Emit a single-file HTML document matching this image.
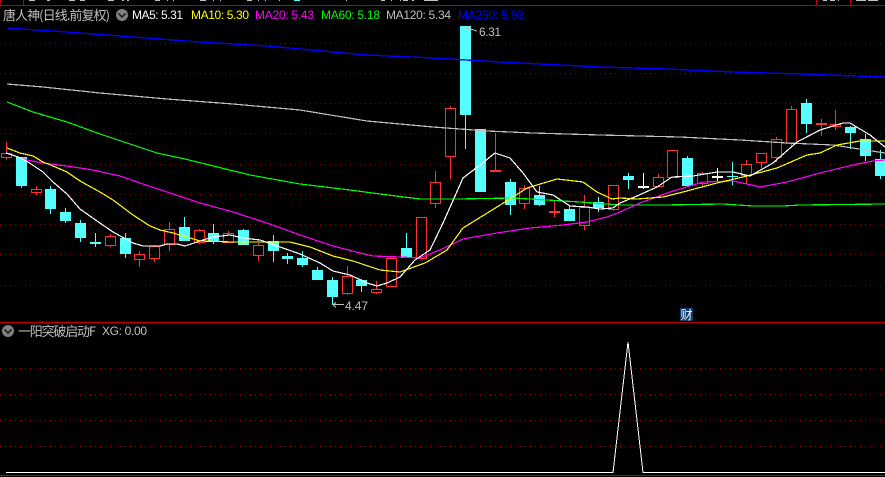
<!DOCTYPE html>
<html><head><meta charset="utf-8"><style>
html,body{margin:0;padding:0;background:#000;width:885px;height:477px;overflow:hidden}
svg{display:block}
text{font-family:"Liberation Sans","WenQuanYi Zen Hei","Noto Sans CJK SC",sans-serif;font-size:12px}
.cjk{font-family:"WenQuanYi Zen Hei","Noto Sans CJK SC",sans-serif;font-size:13px}
</style></head><body>
<svg width="885" height="477" viewBox="0 0 885 477" xmlns="http://www.w3.org/2000/svg">
<rect width="885" height="477" fill="#000"/>
<g shape-rendering="crispEdges">
<!-- top strip -->
<path d="M0 5.5H885M0.5 0V5M23.5 0V5M816.5 0V5M850.5 0V5M0 322.5H885M0 475.5H885" stroke="#c00000" fill="none"/>
<path d="M29 0.5h6M47 0.5h3M69 0.5h6M80 0.5h5M108 0.5h6M122 0.5h2M127 0.5h2M155 0.5h5M167 0.5h1M173 0.5h1M200 0.5h6M213 0.5h1M220 0.5h1M247 0.5h5M258 0.5h1M265 0.5h1M346 0.5h1M381 0.5h4M391 0.5h1M400 0.5h1M403 0.5h5M412 0.5h2M424 0.5h14M823 0.5h4M830 0.5h5M838 0.5h1M856 0.5h10M868 0.5h10" stroke="#c0c0c0" fill="none"/>
<path d="M279 0.5h1M294 0.5h6" stroke="#54ffff" fill="none"/>
<!-- grid -->
<path d="M0 43.5H885M0 73.5H885M0 103.5H885M0 133.5H885M0 164.5H885M0 194.5H885M0 224.5H885M0 254.5H885M0 285.5H885" stroke="#8c0000" stroke-dasharray="1 4" fill="none"/>
<path d="M0 368.5H885M0 394.5H885M0 420.5H885M0 446.5H885" stroke="#a80000" stroke-dasharray="1 4" fill="none"/>
<!-- red candles: outlines and wicks -->
<path fill="none" stroke="#ff3232" d="
M1.5 153.5h10v4h-10zM6.5 142V153M6.5 158V160
M31.5 189.5h10v3h-10zM36.5 186V189M36.5 193V195
M105.5 236.5h10v9h-10zM110.5 234V236M110.5 246V247
M134.5 254.5h10v5h-10zM139.5 251V254M139.5 260V267
M149.5 246.5h10v12h-10zM154.5 245V246M154.5 259V262
M164.5 229.5h10v15h-10zM169.5 222V229M169.5 245V251
M194.5 230.5h10v12h-10zM199.5 229V230M199.5 243V244
M223.5 233.5h10v9h-10zM228.5 231V233
M253.5 245.5h10v10h-10zM258.5 243V245M258.5 256V261
M342.5 276.5h10v17h-10zM347.5 266V276M347.5 294V295
M371.5 289.5h10v3h-10zM376.5 281V289M376.5 293V294
M386.5 258.5h10v28h-10zM391.5 257V258
M416.5 217.5h10v41h-10z
M430.5 182.5h10v21h-10zM435.5 171V182M435.5 204V208
M445.5 108.5h10v48h-10zM450.5 106V108M450.5 157V179
M519.5 188.5h10v15h-10zM524.5 185V188M524.5 204V209
M579.5 207.5h10v18h-10zM584.5 195V207M584.5 226V230
M608.5 185.5h10v24h-10zM613.5 210V211
M653.5 177.5h10v9h-10zM658.5 174V177
M667.5 150.5h10v27h-10z
M697.5 173.5h10v10h-10zM702.5 172V173M702.5 184V186
M741.5 164.5h10v11h-10zM746.5 160V164M746.5 176V184
M756.5 153.5h10v9h-10zM761.5 163V168
M771.5 139.5h10v18h-10zM776.5 137V139M776.5 158V162
M786.5 109.5h10v34h-10zM791.5 106V109M791.5 144V147
M830.5 124.5h10v2h-10zM835.5 110V124M835.5 127V130
M495.5 133V172M554.5 201V217M821.5 119V136"/>
<path fill="#ff3232" d="M490 170h11v2h-11zM549 211h11v2h-11zM816 123h11v2h-11z"/>
<!-- cyan candles -->
<path fill="#54ffff" d="
M16 157h11v29h-11zM45 189h11v20h-11zM60 212h11v9h-11zM75 223h11v15h-11zM90 242h11v2h-11zM120 238h11v16h-11zM179 227h11v14h-11zM208 233h11v9h-11zM238 230h11v15h-11zM268 241h11v10h-11zM282 256h11v3h-11zM297 258h11v7h-11zM312 270h11v10h-11zM327 280h11v17h-11zM356 280h11v6h-11zM401 248h11v10h-11zM460 26h11v89h-11zM475 129h11v63h-11zM505 182h11v23h-11zM534 195h11v10h-11zM564 209h11v12h-11zM593 202h11v6h-11zM623 176h11v4h-11zM682 158h11v28h-11zM727 176h11v1h-11zM801 103h11v21h-11zM845 127h11v6h-11zM860 139h11v17h-11zM875 159h10v17h-10z"/>
<path fill="none" stroke="#54ffff" d="
M21.5 186V188M50.5 186V214M65.5 208V223M80.5 220V242M95.5 233V247M125.5 233V258M184.5 217V227M213.5 224V244M243.5 229V231M273.5 235V262M287.5 253V264M302.5 251V267M317.5 267V271M332.5 277V305M361.5 279V292M406.5 233V249M465.5 115V149M510.5 179V215M539.5 186V206M569.5 206V210M598.5 197V212M628.5 173V189M687.5 156V159M732.5 162V185M806.5 99V133M850.5 126V149M865.5 134V161M880.5 150V179"/>
<!-- white crosses -->
<path fill="#fff" d="M638 186h11v2h-11zM712 176h11v2h-11z"/>
<path fill="none" stroke="#fff" d="M643.5 173V189M717.5 168V182"/>
<!-- MA lines -->
<polyline fill="none" stroke="#0000ff" stroke-width="1.4" points="7,28 67,32 133,37 200,42 267,46 300,49 367,55 433,58 500,62 600,67 667,69 733,72 800,74 885,77"/>
<polyline fill="none" stroke="#c0c0c0" stroke-width="1.2" points="7,84 43,87 100,93 167,99 233,104 300,110 367,121 433,127 487,131 533,133 600,135 680,137 740,140 787,143 833,145 885,153"/>
<polyline fill="none" stroke="#00ff00" stroke-width="1.2" points="7,102 33,112 67,122 100,134 133,145 157,153 185,159 250,175 300,184 350,190 380,194 420,199 457,199 513,198 547,200 580,202 620,205 663,205 723,204 753,206 783,206 800,205 885,204"/>
<polyline fill="none" stroke="#ff00ff" stroke-width="1.2" points="7,153 27,160 43,163 67,166 93,170 120,176 140,183 167,192 200,203 233,212 267,223 300,235 333,246 360,253 373,256 400,257 420,258 440,250 463,239 497,233 530,228 563,225 587,222 607,217 620,212 640,203 670,192 703,182 733,181 747,184 760,187 787,182 820,173 853,165 873,161 885,160"/>
<polyline fill="none" stroke="#ffff00" stroke-width="1.2" points="7,148 20,153 33,156 43,162 53,166 67,172 80,181 100,192 113,200 133,215 150,226 160,230 173,233 190,238 200,241 233,242 290,242 310,247 333,256 353,261 380,270 400,272 425,263 447,250 463,228 497,207 513,197 527,188 547,182 557,179 583,182 597,192 612,199 620,198 637,199 663,197 683,192 717,183 743,177 777,168 807,155 820,153 837,145 860,141 885,141"/>
<polyline fill="none" stroke="#ffffff" stroke-width="1.2" points="6,153 21,158 28,162 43,172 53,182 67,194 80,209 97,221 113,232 133,243 143,246 160,246 167,244 177,244 185,246 200,241 213,237 230,235 243,238 260,240 280,247 300,254 320,263 333,271 350,275 367,283 377,286 387,283 400,277 415,260 430,250 443,223 463,178 480,165 495,153 510,158 523,173 537,192 553,195 570,206 587,207 600,209 613,208 620,203 637,196 657,187 672,177 693,176 717,172 733,172 750,176 773,163 797,142 820,130 843,123 850,123 870,135 885,147"/>
<!-- lower pane -->
<polyline fill="none" stroke="#fff" points="6,472.5 613,472.5 628,342 643,472.5 885,472.5"/>
<!-- annotations -->
<path fill="none" stroke="#c0c0c0" d="M333 304.5H344M333 304.5l3 -2M333 304.5l3 3M467 28l10 3M467 28l3 -2M467 28l1 3"/>
<rect x="680" y="308" width="13" height="13" fill="#0a3a6e"/>
</g>
<!-- text -->
<text x="345" y="310" fill="#c0c0c0" textLength="23">4.47</text>
<text x="479" y="36" fill="#c0c0c0" textLength="22">6.31</text>
<text x="3" y="20" class="cjk" fill="#c0c0c0" textLength="107">唐人神(日线.前复权)</text>
<circle cx="122" cy="15" r="6" fill="#808080"/>
<path d="M118.5 13.5l3.5 3.5 3.5-3.5" fill="none" stroke="#222" stroke-width="1.6"/>
<text x="132" y="19" fill="#ffffff" textLength="51">MA5: 5.31</text>
<text x="191" y="19" fill="#ffff00" textLength="58">MA10: 5.30</text>
<text x="255" y="19" fill="#ff00ff" textLength="59">MA20: 5.43</text>
<text x="321" y="19" fill="#00ff00" textLength="59">MA60: 5.18</text>
<text x="386" y="19" fill="#c0c0c0" textLength="65">MA120: 5.34</text>
<text x="458" y="19" fill="#0000ff" textLength="66">MA250: 5.93</text>
<circle cx="8" cy="331" r="6" fill="#808080"/>
<path d="M4.5 329.5l3.5 3.5 3.5-3.5" fill="none" stroke="#222" stroke-width="1.6"/>
<text x="18" y="336" class="cjk" fill="#c0c0c0" textLength="78">一阳突破启动F</text>
<text x="102" y="335" fill="#c0c0c0" textLength="45">XG: 0.00</text>
<text x="680.5" y="319" class="cjk" style="font-size:12px" fill="#ffffff">财</text>
</svg>
</body></html>
